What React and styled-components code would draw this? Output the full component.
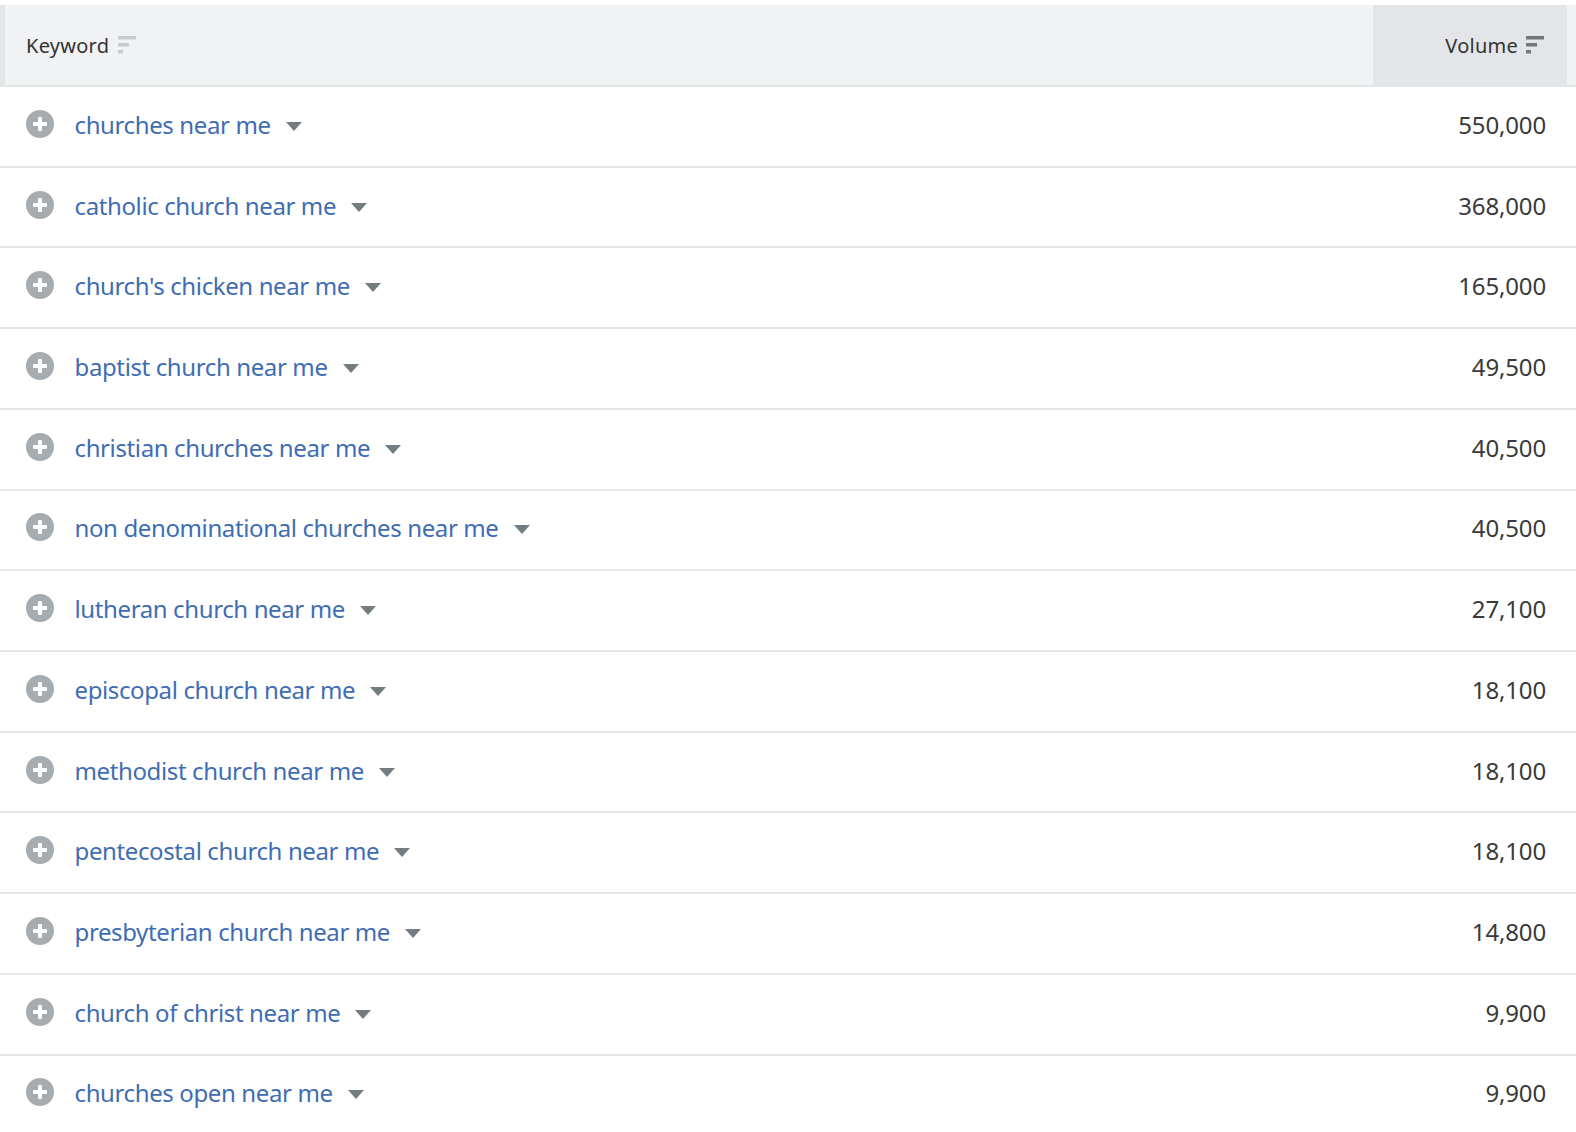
import React from "react";
import styled, { createGlobalStyle } from "styled-components";

const GlobalStyle = createGlobalStyle`
  html, body {
    margin: 0;
    padding: 0;
    background: #fff;
  }
  body {
    font-family: "Noto Sans", "Open Sans", sans-serif;
    overflow: hidden;
  }
`;

const Table = styled.div`
  width: 1576px;
  height: 1132px;
  padding-top: 5px;
  box-sizing: border-box;
  overflow: hidden;
`;

const Head = styled.div`
  display: flex;
  height: 80px;
  background: #f1f2f4;
  border-bottom: 2px solid #e4e7e8;
`;

const KeywordHead = styled.div`
  flex: 1;
  display: flex;
  align-items: center;
  gap: 9px;
  padding-left: 21px;
  border-left: 5px solid #e3e5e7;
`;

const VolumeHead = styled.div`
  width: 194px;
  margin-right: 9px;
  box-sizing: border-box;
  display: flex;
  align-items: center;
  justify-content: flex-end;
  gap: 8px;
  padding-right: 23px;
  background: #e4e5e8;
`;

const HeadLabel = styled.span`
  font-size: 20px;
  letter-spacing: 0.25px;
  color: #333;
`;

const Row = styled.div`
  display: flex;
  align-items: center;
  height: 80.72px;
  box-sizing: border-box;
  border-bottom: 2px solid #e3e7e8;
  padding: 0 30px 0 26px;
`;

const AddIcon = styled.svg`
  width: 28px;
  height: 28px;
  flex: none;
  margin-top: -5px;
`;

const KeywordLink = styled.a`
  margin: 0 0 4px 20.5px;
  font-size: 24px;
  letter-spacing: -0.38px;
  color: #3f6db3;
  text-decoration: none;
`;

const Caret = styled.span`
  width: 0;
  height: 0;
  margin-left: 15px;
  border-left: 8.5px solid transparent;
  border-right: 8.5px solid transparent;
  border-top: 9px solid #737c80;
`;

const Volume = styled.span`
  margin: 0 0 4px auto;
  font-size: 24px;
  letter-spacing: -0.15px;
  color: #3a3a3a;
`;

const rows = [
  ["churches near me", "550,000"],
  ["catholic church near me", "368,000"],
  ["church's chicken near me", "165,000"],
  ["baptist church near me", "49,500"],
  ["christian churches near me", "40,500"],
  ["non denominational churches near me", "40,500"],
  ["lutheran church near me", "27,100"],
  ["episcopal church near me", "18,100"],
  ["methodist church near me", "18,100"],
  ["pentecostal church near me", "18,100"],
  ["presbyterian church near me", "14,800"],
  ["church of christ near me", "9,900"],
  ["churches open near me", "9,900"],
];

function SortIcon({ color }) {
  return (
    <svg width="18" height="18" viewBox="0 0 18 18" fill={color}>
      <rect x="0" y="0" width="18" height="3.5" />
      <rect x="0" y="7" width="11" height="3.5" />
      <rect x="0" y="14" width="5" height="3.5" />
    </svg>
  );
}

export default function App() {
  return (
    <>
      <GlobalStyle />
      <Table>
        <Head>
          <KeywordHead>
            <HeadLabel>Keyword</HeadLabel>
            <SortIcon color="#c8cccd" />
          </KeywordHead>
          <VolumeHead>
            <HeadLabel>Volume</HeadLabel>
            <SortIcon color="#6f787c" />
          </VolumeHead>
        </Head>
        {rows.map(([keyword, volume]) => (
          <Row key={keyword}>
            <AddIcon viewBox="0 0 28 28">
              <circle cx="14" cy="14" r="14" fill="#a6acaf" />
              <rect x="7" y="12" width="14" height="4" rx="1" fill="#fff" />
              <rect x="12" y="7" width="4" height="14" rx="1" fill="#fff" />
            </AddIcon>
            <KeywordLink href="#">{keyword}</KeywordLink>
            <Caret />
            <Volume>{volume}</Volume>
          </Row>
        ))}
      </Table>
    </>
  );
}
